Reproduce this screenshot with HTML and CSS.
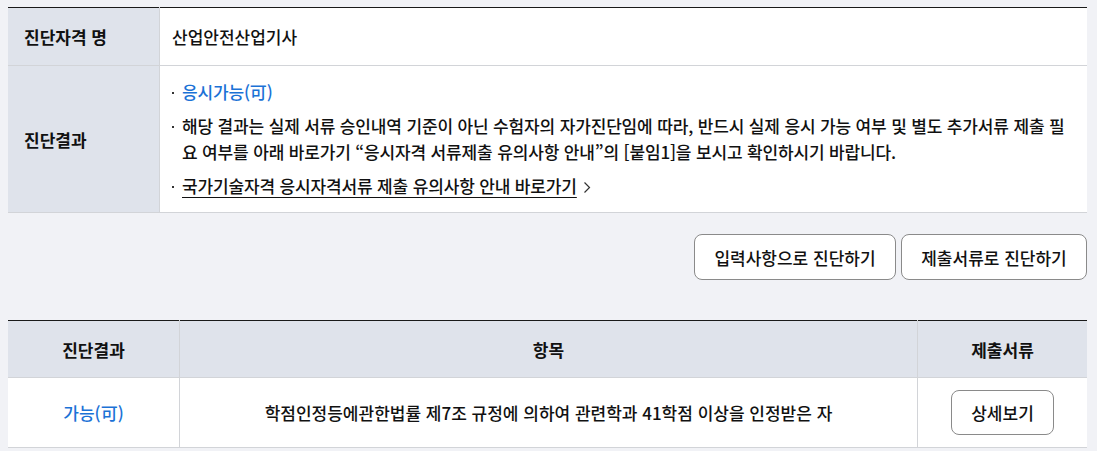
FILE: index.html
```html
<!DOCTYPE html>
<html lang="ko">
<head>
<meta charset="utf-8">
<title>진단결과</title>
<link rel="stylesheet" href="styles.css">
</head>
<body>
<div class="page">
  <table class="info">
    <tr class="row-name">
      <th>진단자격 명</th>
      <td>산업안전산업기사</td>
    </tr>
    <tr class="row-result">
      <th>진단결과</th>
      <td>
        <ul class="bullets">
          <li class="ok">응시가능(可)</li>
          <li>해당 결과는 실제 서류 승인내역 기준이 아닌 수험자의 자가진단임에 따라, 반드시 실제 응시 가능 여부 및 별도 추가서류 제출 필요 여부를 아래 바로가기 “응시자격 서류제출 유의사항 안내”의 [붙임1]을 보시고 확인하시기 바랍니다.</li>
          <li><a class="link" href="#">국가기술자격 응시자격서류 제출 유의사항 안내 바로가기</a><svg class="chev" width="8" height="13" viewBox="0 0 8 13"><path d="M1.5 1.5 L6.5 6.5 L1.5 11.5" fill="none" stroke="#333" stroke-width="1.2"/></svg></li>
        </ul>
      </td>
    </tr>
  </table>

  <div class="actions">
    <button class="btn btn-a">입력사항으로 진단하기</button>
    <button class="btn btn-b">제출서류로 진단하기</button>
  </div>

  <table class="list">
    <thead>
      <tr>
        <th class="c1">진단결과</th>
        <th class="c2">항목</th>
        <th class="c3">제출서류</th>
      </tr>
    </thead>
    <tbody>
      <tr>
        <td class="c1 ok">가능(可)</td>
        <td class="c2">학점인정등에관한법률 제7조 규정에 의하여 관련학과 41학점 이상을 인정받은 자</td>
        <td class="c3"><button class="btn btn-s">상세보기</button></td>
      </tr>
    </tbody>
  </table>
</div>
</body>
</html>
```

FILE: styles.css
```css
html, body {
  margin: 0;
  padding: 0;
  background: #f1f2f6;
}
body {
  font-family: "Noto Sans CJK KR", "Noto Sans", sans-serif;
  color: #111;
  font-size: 17px;
  font-weight: 500;
}
.page {
  padding: 7px 10px 0 8px;
}
table {
  width: 100%;
  border-collapse: collapse;
  border-spacing: 0;
}
.info {
  border-top: 1px solid #1a1a1a;
}
.info th {
  width: 135px;
  background: #dfe3eb;
  text-align: left;
  font-weight: 700;
  padding: 0 0 0 16px;
  border-bottom: 1px solid #d2d4d8;
  border-right: 1px solid #d2d4d8;
}
.info td {
  background: #fff;
  border-bottom: 1px solid #d2d4d8;
  padding: 0 12px 0 12px;
}
.row-name th, .row-name td {
  height: 57px;
}
.row-result td {
  padding-top: 13px;
  padding-bottom: 13px;
}
.bullets {
  list-style: none;
  margin: 0;
  padding: 0;
  letter-spacing: -0.15px;
}
.bullets li {
  position: relative;
  padding-left: 10px;
  line-height: 26px;
  margin-bottom: 8px;
  word-break: break-all;
}
.bullets li:last-child {
  margin-bottom: 0;
}
.bullets li::before {
  content: "";
  position: absolute;
  left: 0;
  top: 13px;
  width: 2px;
  height: 2px;
  background: #333;
}
.ok {
  color: #1b72d6;
}
.link {
  color: #111;
  text-decoration: underline;
  text-underline-offset: 4px;
}
.chev {
  margin-left: 6px;
  vertical-align: -1px;
}
.actions {
  display: flex;
  justify-content: flex-end;
  gap: 5px;
  margin-top: 21px;
  margin-bottom: 40px;
}
.btn {
  font-family: inherit;
  font-size: 17px;
  font-weight: 500;
  color: #111;
  background: #fff;
  border: 1px solid #8a8a8a;
  border-radius: 8px;
  cursor: pointer;
  padding: 0;
}
.btn-a {
  width: 202px;
  height: 46px;
}
.btn-b {
  width: 186px;
  height: 46px;
}
.list {
  border-top: 1px solid #1a1a1a;
}
.list th {
  background: #dfe3eb;
  height: 56px;
  font-weight: 700;
  text-align: center;
  border-bottom: 1px solid #d2d4d8;
  padding: 0;
}
.list td {
  background: #fff;
  height: 69px;
  text-align: center;
  border-bottom: 1px solid #d2d4d8;
  padding: 0;
}
.list .c1 { width: 171px; border-right: 1px solid #d2d4d8; }
.list .c3 { width: 169px; border-left: 1px solid #d2d4d8; }
.btn-s {
  width: 103px;
  height: 45px;
}
```
